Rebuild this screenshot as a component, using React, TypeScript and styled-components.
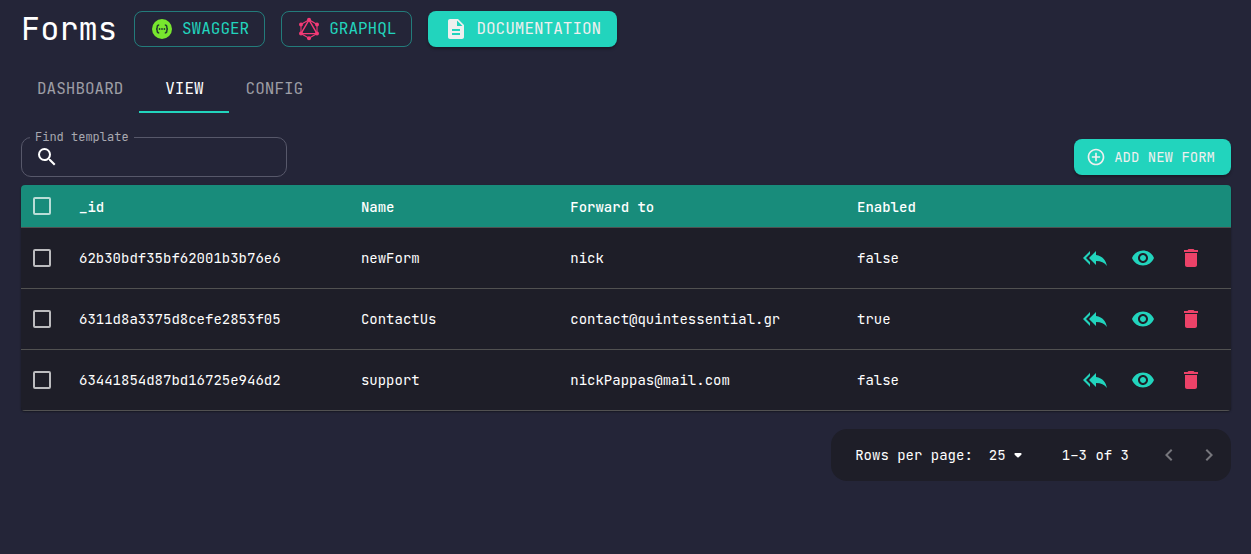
import React, { useState } from "react";
import styled, { createGlobalStyle, css } from "styled-components";
import {
  MdAddCircleOutline,
  MdChevronLeft,
  MdChevronRight,
  MdDelete,
  MdDescription,
  MdReplyAll,
  MdSearch,
  MdVisibility,
} from "react-icons/md";

const color = {
  page: "#242538",
  panel: "#1e1e28",
  teal: "#22d4bd",
  tealEdge: "rgba(34, 212, 189, 0.5)",
  head: "#188c7b",
  line: "#515151",
  text: "#ffffff",
  muted: "rgba(255, 255, 255, 0.56)",
  onTeal: "#efefef",
  danger: "#ec4268",
};

const GlobalStyle = createGlobalStyle`
  * { box-sizing: border-box; }
  body {
    margin: 0;
    background: ${color.page};
    color: ${color.text};
    font-family: "JetBrains Mono", "DejaVu Sans Mono", monospace;
    font-size: 14px;
  }
  button, input, select { font: inherit; color: inherit; }
`;

const Page = styled.main`
  padding: 8px 20px 24px 21px;
`;

const Header = styled.header`
  display: flex;
  align-items: center;
  gap: 17px;
`;

const HeaderLinks = styled.div`
  display: flex;
  gap: 16px;
`;

const Title = styled.h1`
  margin: 0;
  font-size: 32px;
  line-height: 42px;
  font-weight: 400;
`;

const buttonShape = css`
  display: inline-flex;
  align-items: center;
  gap: 8px;
  height: 36px;
  border-radius: 8px;
  white-space: nowrap;
  cursor: pointer;
`;

const filled = css`
  border: 0;
  background: ${color.teal};
  color: ${color.onTeal};
  box-shadow: 0 2px 3px rgba(0, 0, 0, 0.3);
`;

const LinkButton = styled.a<{ $filled?: boolean }>`
  ${buttonShape}
  padding: 0 15px;
  border: 1px solid ${color.tealEdge};
  color: ${color.teal};
  font-size: 16px;
  line-height: 28px;
  text-decoration: none;
  ${(p) => p.$filled && filled}
  ${(p) => p.$filled && "padding: 0 16px;"}
`;

const AddButton = styled.button`
  ${buttonShape}
  ${filled}
  margin-bottom: 2px;
  padding: 0 16px 0 12px;
`;

const Tabs = styled.nav`
  display: flex;
  margin: 15px 0 16px;
`;

const Tab = styled.button<{ $active: boolean }>`
  min-width: 90px;
  height: 48px;
  padding: 0 16px;
  border: 0;
  border-bottom: 2px solid ${(p) => (p.$active ? color.teal : "transparent")};
  background: none;
  color: ${(p) => (p.$active ? color.text : color.muted)};
  font-size: 16px;
  cursor: pointer;
`;

const Toolbar = styled.div`
  display: flex;
  align-items: flex-end;
  justify-content: space-between;
  margin-bottom: 8px;
`;

const SearchField = styled.fieldset`
  display: flex;
  align-items: center;
  width: 266px;
  height: 48px;
  margin: 0;
  padding: 0 8px 8px;
  border: 1px solid #57586a;
  border-radius: 10px;
`;

const SearchLegend = styled.legend`
  padding: 0 5px;
  color: #a9a9b1;
  font-size: 12px;
  line-height: 17px;
`;

const SearchRow = styled.div`
  display: flex;
  align-items: center;
  gap: 8px;
  padding: 0 5px;
`;

const SearchInput = styled.input`
  flex: 1;
  min-width: 0;
  height: 24px;
  padding: 0;
  border: 0;
  outline: 0;
  background: none;
`;

const TablePanel = styled.div`
  overflow: hidden;
  border-radius: 4px;
  background: ${color.panel};
  box-shadow: 0 1px 2px rgba(0, 0, 0, 0.4);
`;

const Table = styled.table`
  width: 100%;
  table-layout: fixed;
  border-collapse: separate;
  border-spacing: 0;
`;

const Col = styled.col<{ $width?: string }>`
  width: ${(p) => p.$width ?? "auto"};
`;

const HeadCell = styled.th`
  height: 43px;
  padding: 2px 16px 0;
  border-bottom: 1px solid ${color.line};
  background: ${color.head};
  background-clip: padding-box;
  font-weight: 500;
  text-align: left;
`;

const Cell = styled.td`
  height: 61px;
  padding: 0 16px;
  border-bottom: 1px solid ${color.line};
`;

const CheckHead = styled(HeadCell)`
  padding: 0 0 0 12px;
`;

const CheckCell = styled(Cell)`
  padding: 0 0 0 12px;
`;

const CheckBox = styled.input`
  appearance: none;
  display: block;
  width: 18px;
  height: 18px;
  margin: 0;
  border: 2px solid rgba(255, 255, 255, 0.7);
  border-radius: 2px;
  cursor: pointer;
  &:checked {
    background: ${color.teal};
  }
`;

const Actions = styled.div`
  display: flex;
  justify-content: flex-end;
`;

const IconButton = styled.button<{ $size: number; $color: string }>`
  display: flex;
  align-items: center;
  justify-content: center;
  width: ${(p) => p.$size}px;
  height: ${(p) => p.$size}px;
  padding: 0;
  border: 0;
  background: none;
  color: ${(p) => p.$color};
  cursor: pointer;
`;

const Pagination = styled.footer`
  display: flex;
  align-items: center;
  width: fit-content;
  height: 52px;
  margin: 18px 0 0 auto;
  padding: 0 2px 0 24px;
  border-radius: 16px;
  background: ${color.panel};
`;

const SelectWrap = styled.span`
  display: grid;
  align-items: center;
  margin: 0 32px 0 8px;
`;

const PageSelect = styled.select`
  grid-area: 1 / 1;
  appearance: none;
  width: 49px;
  height: 24px;
  padding: 0 24px 0 8px;
  border: 0;
  background: none;
`;

const Caret = styled.svg`
  grid-area: 1 / 1;
  justify-self: end;
  pointer-events: none;
`;

const PageButtons = styled.div`
  display: flex;
  margin-left: 20px;
`;

const SwaggerIcon = () => (
  <svg width="24" height="24" viewBox="0 0 24 24" aria-hidden="true">
    <circle cx="12" cy="12" r="10" fill="#78e62e" />
    <g fill="none" stroke="#24402f" strokeWidth="1.5">
      <path d="M9.200 8c-1.600 0-2 .6-2 1.900 0 1.400-.2 2.100-1.200 2.100 1 0 1.200.7 1.200 2.100 0 1.300.4 1.900 2 1.900" />
      <path d="M14.800 8c1.600 0 2 .6 2 1.900 0 1.400.2 2.100 1.200 2.100-1 0-1.200.7-1.200 2.100 0 1.300-.4 1.900-2 1.900" />
    </g>
    <g fill="#24402f">
      <circle cx="9.600" cy="12" r=".9" />
      <circle cx="12" cy="12" r=".9" />
      <circle cx="14.400" cy="12" r=".9" />
    </g>
  </svg>
);

const graphNodes = [
  [12, 2.8],
  [20, 7.4],
  [20, 16.6],
  [12, 21.2],
  [4, 16.6],
  [4, 7.4],
];

const GraphqlIcon = () => (
  <svg width="24" height="24" viewBox="0 0 24 24" aria-hidden="true">
    <g fill="none" stroke="#f43a76">
      <path d="M12 2.800l8 4.600v9.200l-8 4.600-8-4.600V7.400z" strokeWidth="1.100" />
      <path d="M12 2.800l8 13.800H4z" strokeWidth="1.400" />
    </g>
    {graphNodes.map(([cx, cy]) => (
      <circle key={`${cx}-${cy}`} cx={cx} cy={cy} r="2" fill="#f43a76" />
    ))}
  </svg>
);

const tabs = ["DASHBOARD", "VIEW", "CONFIG"];

const forms = [
  { id: "62b30bdf35bf62001b3b76e6", name: "newForm", forward: "nick", enabled: false },
  { id: "6311d8a3375d8cefe2853f05", name: "ContactUs", forward: "contact@quintessential.gr", enabled: true },
  { id: "63441854d87bd16725e946d2", name: "support", forward: "nickPappas@mail.com", enabled: false },
];

export default function App() {
  const [active, setActive] = useState("VIEW");

  return (
    <>
      <GlobalStyle />
      <Page>
        <Header>
          <Title>Forms</Title>
          <HeaderLinks>
            <LinkButton href="#swagger">
              <SwaggerIcon />
              SWAGGER
            </LinkButton>
            <LinkButton href="#graphql">
              <GraphqlIcon />
              GRAPHQL
            </LinkButton>
            <LinkButton href="#documentation" $filled>
              <MdDescription size={24} />
              DOCUMENTATION
            </LinkButton>
          </HeaderLinks>
        </Header>

        <Tabs>
          {tabs.map((tab) => (
            <Tab key={tab} $active={tab === active} onClick={() => setActive(tab)}>
              {tab}
            </Tab>
          ))}
        </Tabs>

        <Toolbar>
          <SearchField>
            <SearchLegend>
              <label htmlFor="find-template">Find template</label>
            </SearchLegend>
            <SearchRow>
              <MdSearch size={24} />
              <SearchInput id="find-template" type="text" />
            </SearchRow>
          </SearchField>
          <AddButton>
            <MdAddCircleOutline size={20} />
            ADD NEW FORM
          </AddButton>
        </Toolbar>

        <TablePanel>
          <Table>
            <colgroup>
              <Col $width="42px" />
              <Col $width="23.3%" />
              <Col $width="17.3%" />
              <Col $width="23.7%" />
              <Col />
              <Col $width="176px" />
            </colgroup>
            <thead>
              <tr>
                <CheckHead>
                  <CheckBox type="checkbox" aria-label="Select all forms" />
                </CheckHead>
                <HeadCell>_id</HeadCell>
                <HeadCell>Name</HeadCell>
                <HeadCell>Forward to</HeadCell>
                <HeadCell>Enabled</HeadCell>
                <HeadCell aria-label="Actions" />
              </tr>
            </thead>
            <tbody>
              {forms.map((form) => (
                <tr key={form.id}>
                  <CheckCell>
                    <CheckBox type="checkbox" aria-label={`Select ${form.name}`} />
                  </CheckCell>
                  <Cell>{form.id}</Cell>
                  <Cell>{form.name}</Cell>
                  <Cell>{form.forward}</Cell>
                  <Cell>{String(form.enabled)}</Cell>
                  <Cell>
                    <Actions>
                      <IconButton $size={48} $color={color.teal} aria-label="Responses">
                        <MdReplyAll size={24} />
                      </IconButton>
                      <IconButton $size={48} $color={color.teal} aria-label="View">
                        <MdVisibility size={24} />
                      </IconButton>
                      <IconButton $size={48} $color={color.danger} aria-label="Delete">
                        <MdDelete size={24} />
                      </IconButton>
                    </Actions>
                  </Cell>
                </tr>
              ))}
            </tbody>
          </Table>
        </TablePanel>

        <Pagination>
          <label htmlFor="rows-per-page">Rows per page:</label>
          <SelectWrap>
            <PageSelect id="rows-per-page" defaultValue="25">
              <option>10</option>
              <option>25</option>
              <option>50</option>
            </PageSelect>
            <Caret width="24" height="24" viewBox="0 0 24 24" fill="currentColor" aria-hidden="true">
              <path d="M8.710 11.710l2.590 2.590c.39.39 1.020.39 1.410 0l2.590-2.590c.63-.63.18-1.710-.71-1.710H9.410c-.89 0-1.330 1.080-.7 1.710z" />
            </Caret>
          </SelectWrap>
          <span>1–3 of 3</span>
          <PageButtons>
            <IconButton $size={40} $color="#76767c" aria-label="Previous page">
              <MdChevronLeft size={24} />
            </IconButton>
            <IconButton $size={40} $color="#76767c" aria-label="Next page">
              <MdChevronRight size={24} />
            </IconButton>
          </PageButtons>
        </Pagination>
      </Page>
    </>
  );
}
